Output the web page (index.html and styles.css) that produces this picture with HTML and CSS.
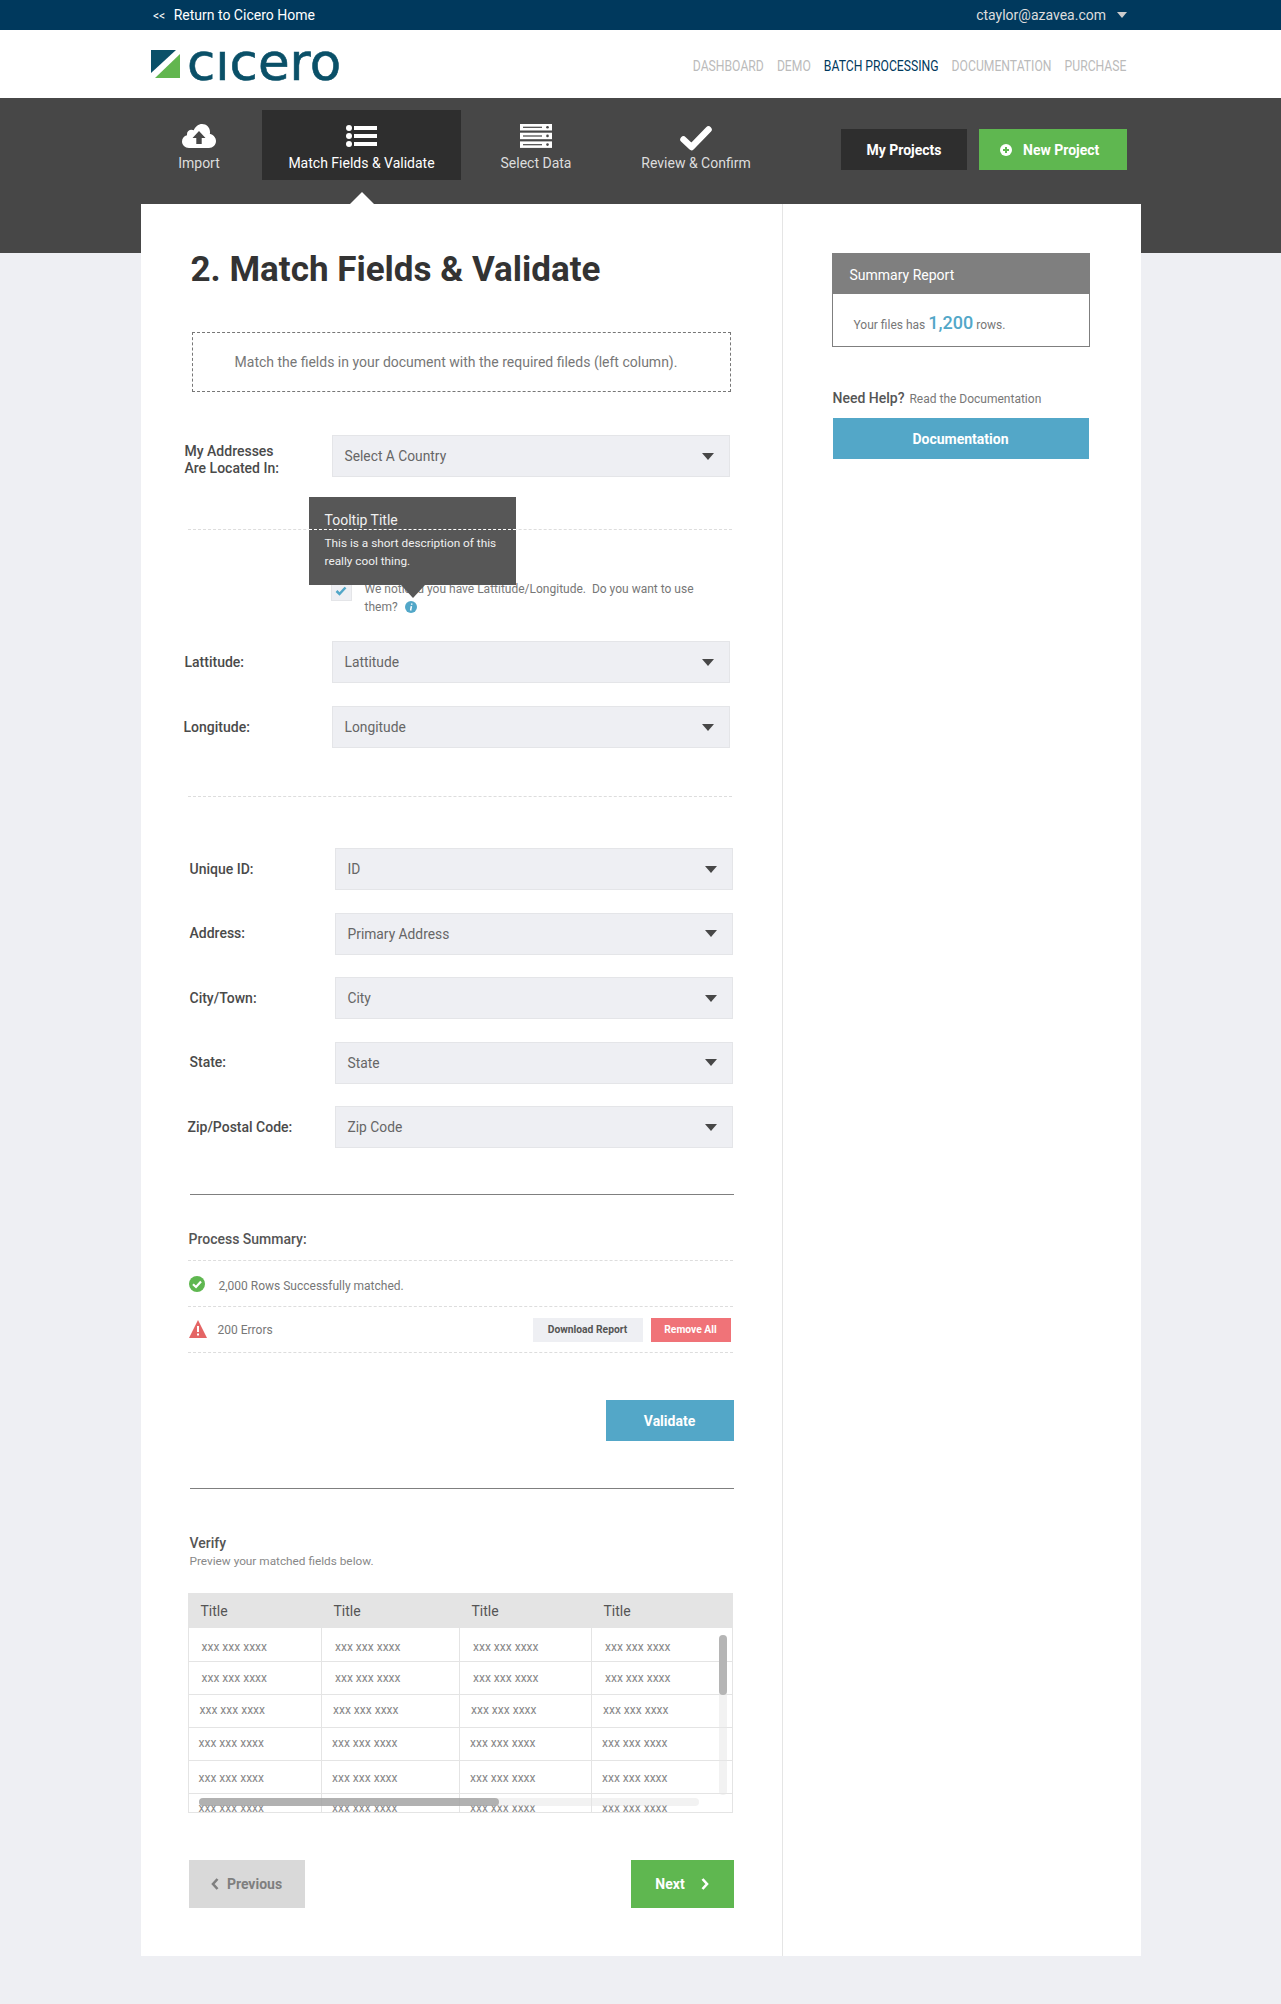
FILE: index.html
```html
<!DOCTYPE html>
<html lang="en">
<head>
    <meta charset="UTF-8">
    <meta name="viewport" content="width=device-width, initial-scale=1.0">
    <title>Cicero - Match Fields &amp; Validate</title>
    <link rel="stylesheet" href="styles.css">
</head>
<body>

  <!-- top strip -->
  <div class="topbar">
    <a class="topbar-back"><span class="topbar-arrows">&lt;&lt;</span> Return to Cicero Home</a>
    <div class="topbar-user">ctaylor@azavea.com <span class="caret caret--light"></span></div>
  </div>

  <!-- logo and site nav -->
  <div class="header">
    <div class="logo">
      <svg class="logo-mark" viewBox="0 0 29 28" width="29" height="28">
        <polygon points="0,0 25,0 0,23" fill="#0a5068"/>
        <polygon points="29,4 29,28 4,28" fill="#62b64f"/>
      </svg>
      <span class="logo-text">cıcero</span>
    </div>
    <div class="site-nav">
      <a>Dashboard</a>
      <a>Demo</a>
      <a class="active">Batch Processing</a>
      <a>Documentation</a>
      <a>Purchase</a>
    </div>
  </div>

  <!-- wizard steps -->
  <div class="band">
    <div class="step step--import">
      <div class="step-icon">
        <svg viewBox="0 0 34 24" width="34" height="24">
          <path fill="#fff" d="M7 24C3 24 0 21 0 17.500C0 14.500 2 12 5 11.300C5 10.800 5 10.500 5 10C5 7.500 7 5.700 9.500 5.700C10.300 5.700 11 5.900 11.700 6.300C13.300 2.500 16.500 0 20 0C24.500 0 28 3.500 28 8C28 8.600 28 9.300 27.800 9.800C31.300 10.600 34 13.600 34 17C34 21 30.800 24 27 24Z"/>
          <path fill="#474747" d="M17 7L23.500 14H19.700V20H14.300V14H10.500Z"/>
        </svg>
      </div>
      <div>Import</div>
    </div>
    <div class="step step--match active">
      <div class="step-icon">
        <svg viewBox="0 0 31 22" width="31" height="22">
          <circle cx="3" cy="3" r="3" fill="#fff"/>
          <circle cx="3" cy="11" r="3" fill="#fff"/>
          <circle cx="3" cy="19" r="3" fill="#fff"/>
          <rect x="8" y="1" width="23" height="4" fill="#fff"/>
          <rect x="8" y="9" width="23" height="4" fill="#fff"/>
          <rect x="8" y="17" width="23" height="4" fill="#fff"/>
        </svg>
      </div>
      <div>Match Fields &amp; Validate</div>
      <span class="step-pointer"></span>
    </div>
    <div class="step step--select">
      <div class="step-icon">
        <svg viewBox="0 0 32 24" width="32" height="24">
          <rect x="0" y="0" width="32" height="6.500" fill="#fff"/>
          <rect x="0" y="8.700" width="32" height="6.500" fill="#fff"/>
          <rect x="0" y="17.400" width="32" height="6.500" fill="#fff"/>
          <rect x="3" y="2.700" width="19" height="1.200" fill="#474747"/>
          <rect x="3" y="11.400" width="19" height="1.200" fill="#474747"/>
          <rect x="3" y="20.100" width="19" height="1.200" fill="#474747"/>
          <circle cx="27.500" cy="3.200" r="1.300" fill="#474747"/>
          <circle cx="27.500" cy="11.900" r="1.300" fill="#474747"/>
          <circle cx="27.500" cy="20.600" r="1.300" fill="#474747"/>
        </svg>
      </div>
      <div>Select Data</div>
    </div>
    <div class="step step--review">
      <div class="step-icon">
        <svg viewBox="0 0 32 25" width="32" height="25">
          <path fill="none" stroke="#fff" stroke-width="6.500" stroke-linecap="round" stroke-linejoin="round" d="M3.500 13.500L11.500 21L28.500 3.500"/>
        </svg>
      </div>
      <div>Review &amp; Confirm</div>
    </div>
    <div class="band-actions">
      <a class="btn btn--dark">My Projects</a>
      <a class="btn btn--green btn--new">
        <svg viewBox="0 0 12 12" width="12" height="12">
          <circle cx="6" cy="6" r="6" fill="#fff"/>
          <path d="M6 3V9M3 6H9" stroke="#5fb750" stroke-width="2"/>
        </svg>
        New Project
      </a>
    </div>
  </div>

  <div class="page">
    <div class="card">

      <div class="main">
        <h1>2. Match Fields &amp; Validate</h1>

        <div class="notice">Match the fields in your document with the required fileds (left column).</div>

        <div class="field field--country">
          <label class="field-label">My Addresses<br>Are Located In:</label>
          <div class="select">Select A Country <span class="caret"></span></div>
        </div>

        <hr class="dots dots--first">

        <div class="latlong-check">
          <span class="checkbox">
            <svg viewBox="0 0 12 10" width="12" height="10"><path fill="none" stroke="#52a7c8" stroke-width="2.500" d="M1.500 5L4.500 8L10.500 1.500"/></svg>
          </span>
          <p>We noticed you have Lattitude/Longitude.&nbsp; Do you want to use them?
            <svg class="info-icon" viewBox="0 0 12 12" width="12" height="12">
              <circle cx="6" cy="6" r="6" fill="#52a7c8"/>
              <path d="M6.700 2.500V3.800M6.400 5.200L5.600 9.500" stroke="#fff" stroke-width="1.500" fill="none"/>
            </svg>
          </p>
        </div>

        <div class="tooltip">
          <div class="tooltip-title">Tooltip Title</div>
          <div class="tooltip-body">This is a short description of this really cool thing.</div>
        </div>

        <div class="field field--lat">
          <label class="field-label">Lattitude:</label>
          <div class="select">Lattitude <span class="caret"></span></div>
        </div>
        <div class="field field--lat field--long">
          <label class="field-label">Longitude:</label>
          <div class="select">Longitude <span class="caret"></span></div>
        </div>

        <hr class="dots dots--second">

        <div class="field-list">
          <div class="field field--wide">
            <label class="field-label">Unique ID:</label>
            <div class="select">ID <span class="caret"></span></div>
          </div>
          <div class="field field--wide">
            <label class="field-label">Address:</label>
            <div class="select">Primary Address <span class="caret"></span></div>
          </div>
          <div class="field field--wide">
            <label class="field-label">City/Town:</label>
            <div class="select">City <span class="caret"></span></div>
          </div>
          <div class="field field--wide">
            <label class="field-label">State:</label>
            <div class="select">State <span class="caret"></span></div>
          </div>
          <div class="field field--wide">
            <label class="field-label field-label--zip">Zip/Postal Code:</label>
            <div class="select">Zip Code <span class="caret"></span></div>
          </div>
        </div>

        <hr class="rule rule--first">

        <div class="summary">
          <div class="summary-title">Process Summary:</div>
          <div class="summary-row summary-row--ok">
            <svg class="summary-icon" viewBox="0 0 16 16" width="16" height="16">
              <circle cx="8" cy="8" r="8" fill="#5fb750"/>
              <path d="M4 8.300L7 11L12 5.500" fill="none" stroke="#fff" stroke-width="2.200"/>
            </svg>
            <span>2,000 Rows Successfully matched.</span>
          </div>
          <div class="summary-row">
            <svg class="summary-icon summary-icon--warn" viewBox="0 0 18 18" width="18" height="18">
              <path d="M9 0L18 18H0Z" fill="#e46565"/>
              <path d="M9 6V12M9 13.500V15.500" stroke="#fff" stroke-width="2"/>
            </svg>
            <span>200 Errors</span>
            <div class="summary-actions">
              <a class="btn-small btn-small--grey">Download Report</a>
              <a class="btn-small btn-small--red">Remove All</a>
            </div>
          </div>
        </div>

        <div class="validate-row">
          <a class="btn btn--blue btn--validate">Validate</a>
        </div>

        <hr class="rule rule--second">

        <div class="verify">
          <div class="verify-title">Verify</div>
          <div class="verify-sub">Preview your matched fields below.</div>
        </div>

        <div class="table-wrap">
          <table class="preview">
            <thead>
              <tr><th>Title</th><th>Title</th><th>Title</th><th>Title</th></tr>
            </thead>
            <tbody>
              <tr class="row-a"><td>xxx xxx xxxx</td><td>xxx xxx xxxx</td><td>xxx xxx xxxx</td><td>xxx xxx xxxx</td></tr>
              <tr class="row-b"><td>xxx xxx xxxx</td><td>xxx xxx xxxx</td><td>xxx xxx xxxx</td><td>xxx xxx xxxx</td></tr>
              <tr class="row-c"><td>xxx xxx xxxx</td><td>xxx xxx xxxx</td><td>xxx xxx xxxx</td><td>xxx xxx xxxx</td></tr>
              <tr class="row-d"><td>xxx xxx xxxx</td><td>xxx xxx xxxx</td><td>xxx xxx xxxx</td><td>xxx xxx xxxx</td></tr>
              <tr class="row-e"><td>xxx xxx xxxx</td><td>xxx xxx xxxx</td><td>xxx xxx xxxx</td><td>xxx xxx xxxx</td></tr>
              <tr class="row-f"><td>xxx xxx xxxx</td><td>xxx xxx xxxx</td><td>xxx xxx xxxx</td><td>xxx xxx xxxx</td></tr>
            </tbody>
          </table>
          <div class="scroll-y"><div class="scroll-y-thumb"></div></div>
          <div class="scroll-x"><div class="scroll-x-thumb"></div></div>
        </div>

        <div class="pager">
          <a class="btn btn--pager btn--prev">
            <svg viewBox="0 0 8 12" width="8" height="12"><path d="M6.500 1L2 6L6.500 11" fill="none" stroke="#7f7f7f" stroke-width="2.600"/></svg>
            Previous
          </a>
          <a class="btn btn--pager btn--green btn--next">
            Next
            <svg viewBox="0 0 8 12" width="8" height="12"><path d="M1.500 1L6 6L1.500 11" fill="none" stroke="#fff" stroke-width="2.600"/></svg>
          </a>
        </div>
      </div>

      <div class="side">
        <div class="report">
          <div class="report-head">Summary Report</div>
          <div class="report-body">Your files has <b>1,200</b> rows.</div>
        </div>
        <div class="help"><b>Need Help?</b> Read the Documentation</div>
        <a class="btn btn--blue btn--doc">Documentation</a>
      </div>

    </div>
  </div>

</body>
</html>
```

FILE: styles.css
```css
* {
  box-sizing: border-box;
}

body {
  margin: 0;
  font-family: Roboto, "Liberation Sans", sans-serif;
  font-size: 14px;
  color: #555;
  background: #eeeff3;
}

a {
  text-decoration: none;
}

/* top strip */
.topbar {
  display: flex;
  justify-content: space-between;
  align-items: center;
  height: 30px;
  padding: 0 154px 0 153px;
  background: #00395d;
  color: #fff;
  font-size: 14px;
}

.topbar-arrows {
  font-size: 12px;
  margin-right: 5px;
}

.topbar-user {
  color: #ddd;
  display: flex;
  align-items: center;
}

.caret {
  display: block;
  width: 0;
  height: 0;
  border: 6px solid transparent;
  border-bottom: 0;
  border-top: 7px solid #474747;
}

.caret--light {
  margin-left: 11px;
  border-left-width: 5px;
  border-right-width: 5px;
  border-top: 6px solid #ccc;
}

/* header */
.header {
  display: flex;
  justify-content: space-between;
  align-items: center;
  height: 68px;
  padding: 0 154px 0 151px;
  background: #fff;
}

.logo {
  display: flex;
  align-items: center;
}

.logo-mark {
  display: block;
}

.logo-text {
  margin: -4px 0 0 7px;
  font-family: "DejaVu Sans", sans-serif;
  font-size: 51.500px;
  line-height: 60px;
  color: #0a5068;
  -webkit-text-stroke: 0.6px #0a5068;
}

/* the reference nav is a condensed face, so squeeze Roboto to its width */
.site-nav {
  display: flex;
  gap: 15px;
  text-transform: uppercase;
  font-size: 14px;
  color: #bbb;
  margin: 4px 1px 0 0;
  transform: scaleX(0.87);
  transform-origin: right center;
}

.site-nav .active {
  color: #00395d;
}

/* wizard steps */
.band {
  display: flex;
  align-items: flex-start;
  height: 155px;
  padding: 12px 0 0 136px;
  background: #474747;
  color: #ddd;
}

.step {
  position: relative;
  height: 70px;
  text-align: center;
  line-height: 20px;
}

.step-icon {
  display: flex;
  justify-content: center;
  align-items: center;
  height: 30px;
  margin: 11px 0 2px;
}

.step-icon svg {
  display: block;
}

.step--import {
  width: 126px;
}

.step--match {
  width: 199px;
}

.step--select {
  width: 150px;
}

.step--review {
  width: 170px;
}

.step--review svg {
  margin-top: 4px;
}

.step.active {
  background: #2e2e2e;
  color: #fff;
}

.step-pointer {
  position: absolute;
  left: 88px;
  top: 82px;
  width: 0;
  height: 0;
  border: 12px solid transparent;
  border-top: 0;
  border-bottom: 12px solid #fff;
}

.band-actions {
  display: flex;
  gap: 12px;
  margin: 19px 0 0 60px;
}

.btn {
  display: flex;
  justify-content: center;
  align-items: center;
  height: 41px;
  font-weight: 700;
  color: #fff;
}

.btn--dark {
  width: 126px;
  background: #2e2e2e;
}

.btn--green {
  background: #5fb750;
}

.btn--new {
  justify-content: flex-start;
  width: 148px;
  padding-left: 21px;
  gap: 11px;
}

.btn--blue {
  background: #53a7c8;
}

/* card */
.page {
  padding-bottom: 48px;
  margin-top: -49px;
}

.card {
  display: flex;
  width: 1000px;
  height: 1752px;
  margin: 0 auto;
  background: #fff;
}

.main {
  position: relative;
  width: 642px;
  padding-top: 44px;
  border-right: 1px solid #e5e5e5;
}

h1 {
  margin: 0 0 0 50px;
  font-size: 35px;
  line-height: 44px;
  font-weight: 700;
  color: #333;
}

.notice {
  width: 539px;
  height: 60px;
  margin: 40px 0 0 51px;
  padding-right: 10px;
  border: 1px dashed #777;
  color: #777;
  text-align: center;
  font-size: 14px;
  line-height: 58px;
}

/* fields */
.field {
  display: flex;
  align-items: center;
  height: 42px;
  margin-left: 44px;
}

.field--country {
  margin-top: 43px;
}

.field--country .field-label {
  padding-top: 8px;
}

.field--lat {
  margin-top: 25px;
}

.field--long {
  margin-top: 23px;
}

.field--long .field-label {
  margin-left: -1px;
  width: 148px;
}

.field--wide {
  margin-left: 49px;
}

.field-list {
  display: flex;
  flex-direction: column;
  gap: 22.600px;
  margin-top: 51px;
}

.field-label {
  flex: none;
  width: 147px;
  font-weight: 500;
  line-height: 17px;
  color: #4a4a4a;
}

.field--wide .field-label {
  width: 145px;
}

.field-label--zip {
  margin-left: -2px;
  margin-right: 2px;
}

.select {
  display: flex;
  justify-content: space-between;
  align-items: center;
  width: 398px;
  height: 42px;
  padding: 0 15px 0 12px;
  background: #eeeff3;
  border: 1px solid #e4e5e8;
  color: #666;
  font-size: 13.800px;
}

.dots {
  height: 0;
  margin: 0 0 0 47px;
  border: 0;
  border-top: 1px dashed #ddd;
}

.dots--first {
  width: 544px;
  margin-top: 52px;
}

.dots--second {
  width: 544px;
  margin-top: 48px;
}

/* lat long question */
.latlong-check {
  display: flex;
  height: 36px;
  margin: 50px 0 0 190px;
}

.checkbox {
  display: flex;
  justify-content: center;
  align-items: center;
  flex: none;
  width: 21px;
  height: 21px;
  background: #eeeff3;
  border: 1px solid #e4e5e8;
}

.latlong-check p {
  width: 340px;
  margin: 0 0 0 13px;
  font-size: 12px;
  line-height: 18px;
  color: #777;
}

.info-icon {
  margin-left: 4px;
  vertical-align: -2px;
}

.tooltip {
  position: absolute;
  left: 168px;
  top: 293px;
  width: 207px;
  height: 88px;
  padding-top: 15px;
  background: #575757;
  color: #f0f0f0;
  z-index: 5;
}

.tooltip:after {
  position: absolute;
  content: "";
  left: 92px;
  top: 88px;
  width: 0;
  height: 0;
  border: 12px solid transparent;
  border-bottom: 0;
  border-top: 13px solid #575757;
}

.tooltip-title {
  padding: 0 0 1px 16px;
  height: 18px;
  font-size: 14px;
  line-height: 16px;
  border-bottom: 1px dashed #fff;
}

.tooltip-body {
  padding: 4px 12px 0 16px;
  font-size: 11.800px;
  line-height: 18px;
}

/* process summary */
.rule {
  height: 0;
  width: 544px;
  margin: 0 0 0 49px;
  border: 0;
  border-top: 1px solid #7f7f7f;
}

.rule--first {
  margin-top: 46px;
}

.rule--second {
  margin-top: 47px;
}

.summary {
  margin: 34px 0 0 47px;
  width: 545px;
}

.summary-title {
  height: 32px;
  padding-left: 1px;
  line-height: 20px;
  font-weight: 500;
  color: #555;
  border-bottom: 1px dashed #ddd;
}

.summary-row {
  display: flex;
  align-items: center;
  height: 46px;
  padding-left: 1px;
  border-bottom: 1px dashed #ddd;
  font-size: 12px;
  color: #777;
}

.summary-row--ok span {
  padding-top: 5px;
}

.summary-icon {
  flex: none;
  margin: 0 14px 0 0;
}

.summary-icon--warn {
  margin: -2px 11px 0 0;
}

.summary-actions {
  display: flex;
  gap: 8px;
  margin-left: auto;
  margin-right: 2px;
}

.btn-small {
  display: flex;
  justify-content: center;
  align-items: center;
  height: 24px;
  font-size: 10.300px;
  font-weight: 700;
}

.btn-small--grey {
  width: 110px;
  background: #eeeff3;
  color: #555;
}

.btn-small--red {
  width: 80px;
  background: #f07378;
  color: #fff;
}

.validate-row {
  display: flex;
  justify-content: flex-end;
  width: 593px;
  margin-top: 47px;
}

.btn--validate {
  width: 128px;
}

/* verify */
.verify {
  margin: 45px 0 0 49px;
}

.verify-title {
  line-height: 18px;
  font-weight: 500;
}

.verify-sub {
  font-size: 11.800px;
  line-height: 18px;
  color: #888;
}

.table-wrap {
  position: relative;
  width: 545px;
  height: 220px;
  margin: 23px 0 0 47px;
  border: 1px solid #e4e4e4;
  overflow: hidden;
}

.preview {
  width: 543px;
  table-layout: fixed;
  border-collapse: collapse;
}

.preview th {
  height: 34px;
  padding: 0 0 0 12px;
  background: #e4e4e4;
  text-align: left;
  font-size: 14px;
  font-weight: 400;
  color: #555;
}

.preview th:nth-child(1),
.preview td:nth-child(1) {
  width: 133px;
}

.preview th:nth-child(2),
.preview td:nth-child(2) {
  width: 138px;
}

.preview th:nth-child(3),
.preview td:nth-child(3) {
  width: 132px;
}

.preview td {
  height: 33px;
  vertical-align: top;
  font-size: 12px;
  line-height: 14px;
  color: #888;
  border-right: 1px solid #e4e4e4;
  border-bottom: 1px solid #e4e4e4;
}

.preview td:last-child {
  border-right: 0;
}

.row-a td { padding: 12px 0 0 13px; }
.row-b td { padding: 9px 0 0 13px; }
.row-c td { padding: 8px 0 0 11px; }
.row-d td { padding: 8px 0 0 10px; }
.row-e td { padding: 10px 0 0 10px; }
.row-f td { padding: 7px 0 0 10px; }

.scroll-y {
  position: absolute;
  left: 530px;
  top: 41px;
  width: 8px;
  height: 160px;
  background: rgba(230, 230, 230, 0.5);
  border-radius: 4px;
}

.scroll-y-thumb {
  height: 60px;
  background: #b5b5b5;
  border-radius: 4px;
}

.scroll-x {
  position: absolute;
  left: 10px;
  top: 204px;
  width: 500px;
  height: 8px;
  background: rgba(230, 230, 230, 0.5);
  border-radius: 4px;
}

.scroll-x-thumb {
  width: 300px;
  height: 8px;
  background: rgba(150, 150, 150, 0.7);
  border-radius: 4px;
}

/* pager */
.pager {
  display: flex;
  justify-content: space-between;
  width: 545px;
  margin: 47px 0 0 48px;
}

.btn--pager {
  height: 48px;
  gap: 8px;
}

.btn--prev {
  width: 116px;
  background: #d9d9d9;
  color: #7f7f7f;
}

.btn--next {
  width: 103px;
  gap: 16px;
}

/* sidebar */
.side {
  padding: 49px 0 0 49px;
}

.report {
  width: 258px;
  height: 94px;
  border: 1px solid #7f7f7f;
}

.report-head {
  height: 40px;
  padding-left: 17px;
  background: #7f7f7f;
  color: #fff;
  line-height: 42px;
}

.report-body {
  padding: 17px 0 0 21px;
  font-size: 12px;
  line-height: 24px;
  color: #777;
}

.report-body b {
  font-size: 18px;
  font-weight: 500;
  color: #52a7c8;
}

.help {
  margin: 41px 0 0 1px;
  height: 20px;
  font-size: 12px;
  line-height: 20px;
  color: #777;
}

.help b {
  margin-right: 2px;
  font-size: 14px;
  font-weight: 500;
  color: #555;
}

.btn--doc {
  width: 256px;
  margin: 10px 0 0 1px;
}
```
